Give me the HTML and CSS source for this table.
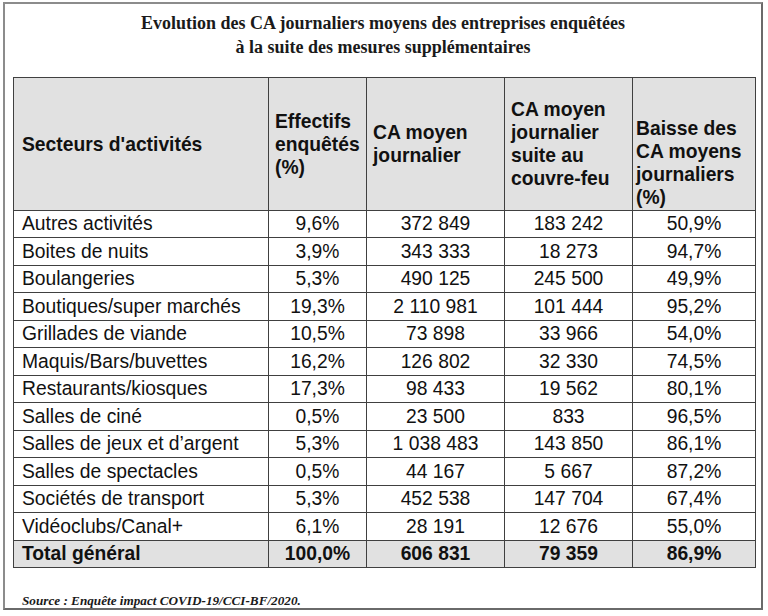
FILE: index.html
```html
<!DOCTYPE html>
<html lang="fr">
<head>
<meta charset="utf-8">
<title>Evolution des CA journaliers moyens</title>
<link rel="stylesheet" href="styles.css">
</head>
<body>
<div class="frame">
  <h1 class="title">Evolution des CA journaliers moyens des entreprises enquêtées<br>à la suite des mesures supplémentaires</h1>
  <table class="data">
    <colgroup>
      <col class="c1"><col class="c2"><col class="c3"><col class="c4"><col class="c5">
    </colgroup>
    <thead>
      <tr class="head">
        <th class="h1">Secteurs d'activités</th>
        <th class="h2">Effectifs<br>enquêtés<br>(%)</th>
        <th class="h3">CA moyen<br>journalier</th>
        <th class="h4">CA moyen<br>journalier<br>suite au<br>couvre-feu</th>
        <th class="h5">Baisse des<br>CA moyens<br>journaliers<br>(%)</th>
      </tr>
    </thead>
    <tbody>
      <tr><td>Autres activités</td><td>9,6%</td><td>372 849</td><td>183 242</td><td>50,9%</td></tr>
      <tr><td>Boites de nuits</td><td>3,9%</td><td>343 333</td><td>18 273</td><td>94,7%</td></tr>
      <tr><td>Boulangeries</td><td>5,3%</td><td>490 125</td><td>245 500</td><td>49,9%</td></tr>
      <tr><td>Boutiques/super marchés</td><td>19,3%</td><td>2 110 981</td><td>101 444</td><td>95,2%</td></tr>
      <tr><td>Grillades de viande</td><td>10,5%</td><td>73 898</td><td>33 966</td><td>54,0%</td></tr>
      <tr><td>Maquis/Bars/buvettes</td><td>16,2%</td><td>126 802</td><td>32 330</td><td>74,5%</td></tr>
      <tr><td>Restaurants/kiosques</td><td>17,3%</td><td>98 433</td><td>19 562</td><td>80,1%</td></tr>
      <tr><td>Salles de ciné</td><td>0,5%</td><td>23 500</td><td>833</td><td>96,5%</td></tr>
      <tr><td>Salles de jeux et d’argent</td><td>5,3%</td><td>1 038 483</td><td>143 850</td><td>86,1%</td></tr>
      <tr><td>Salles de spectacles</td><td>0,5%</td><td>44 167</td><td>5 667</td><td>87,2%</td></tr>
      <tr><td>Sociétés de transport</td><td>5,3%</td><td>452 538</td><td>147 704</td><td>67,4%</td></tr>
      <tr><td>Vidéoclubs/Canal+</td><td>6,1%</td><td>28 191</td><td>12 676</td><td>55,0%</td></tr>
      <tr class="total"><td>Total général</td><td>100,0%</td><td>606 831</td><td>79 359</td><td>86,9%</td></tr>
    </tbody>
  </table>
  <p class="source">Source : Enquête impact COVID-19/CCI-BF/2020.</p>
</div>
</body>
</html>
```

FILE: styles.css
```css
html, body {
  margin: 0;
  padding: 0;
  background: #ffffff;
}

.frame {
  box-sizing: border-box;
  width: 760px;
  height: 608px;
  margin: 2px 0 0 3px;
  border: 2px solid #8c8c8c;
  border-right-color: #6a6a6a;
  border-bottom-color: #6a6a6a;
  padding: 7px 0 0 8px;
  color: #111;
}

.title {
  margin: 0;
  padding-right: 8px;
  font-family: "Liberation Serif", "Times New Roman", serif;
  font-weight: bold;
  font-size: 18px;
  line-height: 24px;
  text-align: center;
  color: #1a1a1a;
}

.data {
  margin-top: 18px;
  border-collapse: collapse;
  table-layout: fixed;
  width: 742px;
  font-family: "Liberation Sans", Arial, sans-serif;
  font-size: 19.3px;
  color: #111;
}

.c1 { width: 255px; }
.c2 { width: 98px; }
.c3 { width: 138px; }
.c4 { width: 128px; }
.c5 { width: 123px; }

.data th,
.data td {
  border: 1px solid #404040;
  padding: 0;
}

.head {
  height: 133px;
  background: #e1e1e1;
}

.data th {
  font-weight: bold;
  text-align: left;
  vertical-align: middle;
  line-height: 23px;
  padding-left: 6px;
}

.data th.h1 { padding-left: 8px; }
.data th.h5 {
  vertical-align: top;
  padding-top: 39px;
  padding-left: 3px;
}

.data tbody tr { height: 27px; }
.data tbody tr:nth-child(even) { height: 28px; }

.data td {
  text-align: center;
  vertical-align: middle;
  line-height: 22px;
  white-space: nowrap;
}

.data td:first-child {
  text-align: left;
  padding-left: 8px;
}

.total {
  background: #e1e1e1;
  font-weight: bold;
}

.source {
  margin: 24px 0 0 9px;
  font-family: "Liberation Serif", "Times New Roman", serif;
  font-style: italic;
  font-weight: bold;
  font-size: 13.2px;
  line-height: 17px;
  color: #1a1a1a;
}
```
